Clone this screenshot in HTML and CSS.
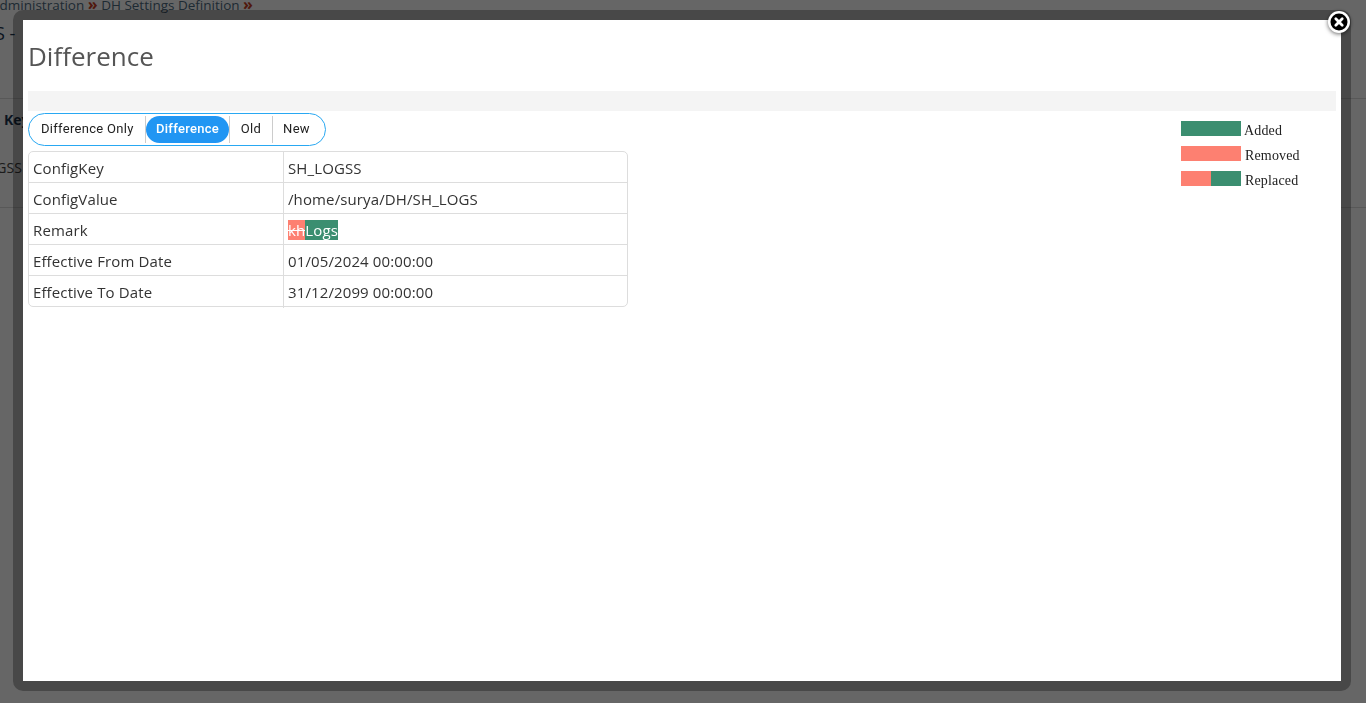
FILE: index.html
```html
<!DOCTYPE html>
<html lang="en">
<head>
  <meta charset="UTF-8">
  <title>Difference</title>
  <link rel="stylesheet" href="styles.css">
</head>
<body>
  <!-- Page behind the popup -->
  <div class="page">
    <div class="breadcrumb">Administration <span class="crumb-sep">»</span> DH Settings Definition <span class="crumb-sep">»</span></div>
    <div class="page-title">S -</div>
    <div class="list">
      <div class="list-head">Key</div>
      <div class="list-row">SH_LOGSS</div>
    </div>
  </div>

  <div class="overlay"></div>

  <div class="popup">
    <div class="popup-inner">
      <h1 class="title">Difference</h1>
      <div class="bar"></div>
      <div class="content">
        <div class="left">
          <div class="switch">
            <div class="switch-item first">Difference Only</div>
            <div class="switch-item active">Difference</div>
            <div class="switch-item old">Old</div>
            <div class="switch-item new">New</div>
          </div>
          <div class="diff-table">
            <div class="diff-row">
              <div class="key">ConfigKey</div>
              <div class="val">SH_LOGSS</div>
            </div>
            <div class="diff-row">
              <div class="key">ConfigValue</div>
              <div class="val">/home/surya/DH/SH_LOGS</div>
            </div>
            <div class="diff-row">
              <div class="key">Remark</div>
              <div class="val"><span class="removed">kh</span><span class="added">Logs</span></div>
            </div>
            <div class="diff-row">
              <div class="key">Effective From Date</div>
              <div class="val">01/05/2024 00:00:00</div>
            </div>
            <div class="diff-row">
              <div class="key">Effective To Date</div>
              <div class="val">31/12/2099 00:00:00</div>
            </div>
          </div>
        </div>
        <div class="legend">
          <div class="legend-row">
            <div class="swatch green"></div>
            <span class="legend-added">Added</span>
          </div>
          <div class="legend-row">
            <div class="swatch red"></div>
            <span>Removed</span>
          </div>
          <div class="legend-row">
            <div class="swatch"><div class="half red"></div><div class="half green"></div></div>
            <span>Replaced</span>
          </div>
        </div>
      </div>
    </div>
    <svg class="close" width="30" height="30" viewBox="0 0 30 30">
      <circle cx="15" cy="15" r="11" fill="#fff"/>
      <circle cx="15" cy="15" r="8.5" fill="#000"/>
      <path d="M11.8 11.8 L18.2 18.2 M18.2 11.8 L11.8 18.2" stroke="#fff" stroke-width="2.8" stroke-linecap="round"/>
    </svg>
  </div>
</body>
</html>
```

FILE: styles.css
```css
html, body {
  height: 100%;
}

body {
  margin: 0;
  overflow: hidden;
  background: #fff;
  font-family: "Open Sans", sans-serif;
}

.page {
  color: #1c3550;
}

.breadcrumb {
  margin: -5px 0 0 -9px;
  font-size: 13.5px;
  line-height: 19px;
  white-space: nowrap;
  color: #4d6a80;
}

.crumb-sep {
  color: #c8401f;
  font-size: 16px;
  font-weight: 700;
}

.page-title {
  margin: 6px 0 0 -5px;
  font-size: 18px;
  line-height: 24px;
  white-space: nowrap;
}

.list {
  margin-top: 53px;
  height: 108px;
  border-top: 1px solid #ddd;
  border-bottom: 1px solid #ddd;
}

.list-head {
  padding: 11px 0 0 4px;
  height: 39px;
  font-size: 14px;
  font-weight: 700;
  line-height: 19px;
}

.list-row {
  margin-left: -46px;
  padding-top: 9px;
  font-size: 14px;
  line-height: 19px;
  color: #444;
}

.overlay {
  position: fixed;
  inset: 0;
  background: rgba(0, 0, 0, 0.6);
}

.popup {
  position: fixed;
  left: 13px;
  top: 10px;
  width: 1318px;
  height: 661px;
  border: 10px solid rgba(0, 0, 0, 0.3);
  border-radius: 10px;
  background: #fff;
  background-clip: padding-box;
}

.popup-inner {
  padding: 0 5px;
}

.title {
  margin: 0;
  height: 71px;
  font-size: 26px;
  font-weight: 400;
  line-height: 72px;
  color: #555;
}

.bar {
  height: 20px;
  background: #f4f4f4;
}

.content {
  display: flex;
  justify-content: space-between;
  padding-top: 2px;
}

.left {
  width: 600px;
}

.switch {
  display: flex;
  box-sizing: border-box;
  width: 298px;
  height: 33px;
  padding: 2px 3px;
  border: 1px solid #29a8f2;
  border-radius: 17px;
  font-family: Roboto, sans-serif;
  font-size: 13px;
  letter-spacing: 0.3px;
  color: #222;
}

.switch-item {
  box-sizing: border-box;
  height: 27px;
  line-height: 25px;
  text-align: center;
  border-right: 1px solid #ccc;
}

.switch-item.first {
  width: 114px;
  padding-left: 9px;
  text-align: left;
}

.switch-item.active {
  width: 83px;
  border-right: 0;
  border-radius: 14px;
  background: #2196f3;
  color: #fff;
  font-weight: 500;
}

.switch-item.old {
  width: 44px;
  border-left: 1px solid #ccc;
}

.switch-item.new {
  width: 47px;
  border-right: 0;
}

.diff-table {
  margin-top: 5px;
  border: 1px solid #ddd;
  border-radius: 5px;
  font-size: 15px;
  letter-spacing: 0.12px;
  color: #333;
}

.diff-row {
  display: grid;
  grid-template-columns: 255px 1fr;
  height: 31px;
  box-sizing: border-box;
  border-bottom: 1px solid #ddd;
  line-height: 32px;
}

.diff-row:last-child {
  height: 30px;
  border-bottom: 0;
}

.key {
  padding-left: 4px;
  border-right: 1px solid #ddd;
}

.val {
  padding-left: 4px;
}

.removed {
  background: #fd8071;
  color: #fff;
  text-decoration: line-through;
}

.added {
  background: #3b8e70;
  color: #fff;
}

.removed, .added {
  display: inline-block;
  height: 20px;
  margin-top: 6px;
  line-height: 20px;
  vertical-align: top;
}

.legend {
  width: 155px;
  padding-top: 8px;
  font-family: "Liberation Serif", serif;
  font-size: 14px;
  letter-spacing: 0.15px;
  color: #222;
}

.legend-row {
  display: flex;
  height: 25px;
  gap: 4px;
}

.legend-row span {
  line-height: 20px;
}

.legend-row .legend-added {
  margin-left: -1px;
}

.swatch {
  display: flex;
  width: 60px;
  height: 15px;
}

.swatch.green, .half.green {
  background: #3b8e70;
}

.swatch.red, .half.red {
  background: #fd8071;
}

.half {
  width: 30px;
}

.close {
  position: absolute;
  top: -13px;
  right: -13px;
  filter: drop-shadow(0 1px 2px rgba(0, 0, 0, 0.6));
}
```
